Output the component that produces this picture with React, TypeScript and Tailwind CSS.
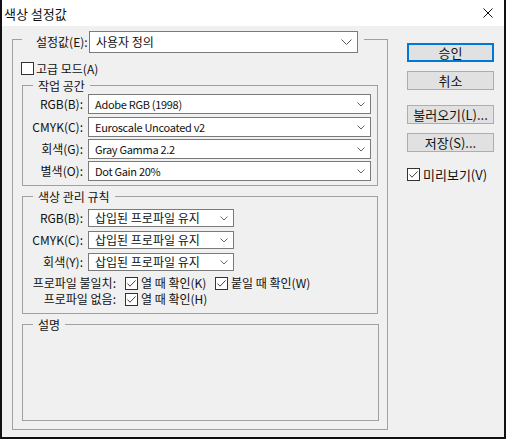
import React from 'react'

function Check({ checked }: { checked?: boolean }) {
  return (
    <span className="w-[13px] h-[13px] border border-[#333] bg-white flex items-center justify-center shrink-0">
      {checked && (
        <svg width="11" height="11" viewBox="0 0 11 11">
          <path d="M1.5 5.5 L4 8.2 L9.6 2.4" fill="none" stroke="#444" strokeWidth="1" />
        </svg>
      )}
    </span>
  )
}

function Chevron({ big }: { big?: boolean }) {
  return big ? (
    <svg width="11" height="6" viewBox="0 0 11 6">
      <path d="M0.5 0.5 L5.5 5.5 L10.5 0.5" fill="none" stroke="#555" strokeWidth="1" />
    </svg>
  ) : (
    <svg width="8" height="5" viewBox="0 0 8 5">
      <path d="M0.5 0.5 L4 4 L7.5 0.5" fill="none" stroke="#666" strokeWidth="1" />
    </svg>
  )
}

function Select({ text, className, big }: { text: string; className: string; big?: boolean }) {
  return (
    <div className={`flex items-center justify-between bg-white border border-[#7a7a7a] pl-[6px] pr-[5px] ${className}`}>
      <span className="whitespace-nowrap">{text}</span>
      <Chevron big={big} />
    </div>
  )
}

function Group({ title, className, children }: { title: string; className: string; children?: React.ReactNode }) {
  return (
    <div className={`border border-[#a0a0a0] ${className}`}>
      <div className="-mt-[8px] ml-[10px] w-fit bg-[#f0f0f0] px-[5px] h-[15px] flex items-center">{title}</div>
      {children}
    </div>
  )
}

function Button({ label, primary }: { label: string; primary?: boolean }) {
  return (
    <div
      className={`h-[19px] flex items-center justify-center bg-[#e1e1e1] ${
        primary ? 'border-2 border-[#0078d7]' : 'border border-[#adadad]'
      }`}
    >
      {label}
    </div>
  )
}

export default function App() {
  const workspace = [
    { label: 'RGB(B):', value: 'Adobe RGB (1998)', mt: 'mt-[1px]' },
    { label: 'CMYK(C):', value: 'Euroscale Uncoated v2', mt: 'mt-[3px]' },
    { label: '회색(G):', value: 'Gray Gamma 2.2', mt: 'mt-[2px]' },
    { label: '별색(O):', value: 'Dot Gain 20%', mt: 'mt-[2px]' },
  ]
  const policies = [
    { label: 'RGB(B):', mt: 'mt-[5px]' },
    { label: 'CMYK(C):', mt: 'mt-[4px]' },
    { label: '회색(Y):', mt: 'mt-[4px]' },
  ]

  return (
    <div className="w-[506px] h-[439px] bg-[#f0f0f0] border-x-2 border-b-2 border-[#111] flex flex-col text-[12px] text-[#111] leading-none overflow-hidden font-['Noto_Sans_CJK_KR',sans-serif]">
      {/* title bar */}
      <div className="h-[26px] shrink-0 bg-white flex items-center justify-between pl-[2px] pr-[11px] text-[13px]">
        <span>색상 설정값</span>
        <svg width="10" height="10" viewBox="0 0 10 10">
          <path d="M0.5 0.5 L9.5 9.5 M9.5 0.5 L0.5 9.5" stroke="#111" strokeWidth="1" />
        </svg>
      </div>

      <div className="flex items-start">
        {/* settings group */}
        <div className="ml-[10px] mt-[13px] w-[376px] h-[391px] border border-[#a0a0a0] pl-[9px]">
          <div className="-mt-[9px] flex items-center w-fit bg-[#f0f0f0] pl-[14px] pr-[6px]">
            <span className="w-[49px] text-right whitespace-nowrap">설정값(E):</span>
            <Select text="사용자 정의" className="ml-[4px] w-[269px] h-[22px]" big />
          </div>

          <div className="mt-[9px] -ml-[1px] flex items-center h-[13px]">
            <Check />
            <span className="ml-[2px]">고급 모드(A)</span>
          </div>

          <Group title="작업 공간" className="mt-[10px] w-[356px] pb-[4px]">
            {workspace.map((row) => (
              <div key={row.label} className={`flex items-center ${row.mt}`}>
                <span className="w-[60px] text-right whitespace-nowrap">{row.label}</span>
                <Select
                  text={row.value}
                  className="ml-[5px] w-[283px] h-[20px] text-[11px] tracking-[-0.3px]"
                />
              </div>
            ))}
          </Group>

          <Group title="색상 관리 규칙" className="mt-[10px] w-[356px] pb-[6px]">
            {policies.map((row) => (
              <div key={row.label} className={`flex items-center ${row.mt}`}>
                <span className="w-[60px] text-right whitespace-nowrap">{row.label}</span>
                <Select text="삽입된 프로파일 유지" className="ml-[5px] w-[146px] h-[18px]" />
              </div>
            ))}
            <div className="mt-[4px] flex items-center h-[16px]">
              <span className="w-[93px] flex justify-end whitespace-nowrap">프로파일 불일치:</span>
              <div className="ml-[9px] w-[90px] flex items-center">
                <Check checked />
                <span className="ml-[3px] whitespace-nowrap">열 때 확인(K)</span>
              </div>
              <Check checked />
              <span className="ml-[3px] whitespace-nowrap">붙일 때 확인(W)</span>
            </div>
            <div className="flex items-center h-[16px]">
              <span className="w-[93px] flex justify-end whitespace-nowrap">프로파일 없음:</span>
              <div className="ml-[9px] flex items-center">
                <Check checked />
                <span className="ml-[3px] whitespace-nowrap">열 때 확인(H)</span>
              </div>
            </div>
          </Group>

          <Group title="설명" className="mt-[10px] w-[357px] h-[97px]" />
        </div>

        {/* buttons */}
        <div className="ml-[19px] mt-[17px] w-[87px] flex flex-col text-[13px]">
          <Button label="승인" primary />
          <div className="mt-[9px]">
            <Button label="취소" />
          </div>
          <div className="mt-[15px]">
            <Button label="불러오기(L)..." />
          </div>
          <div className="mt-[9px]">
            <Button label="저장(S)..." />
          </div>
          <div className="mt-[16px] flex items-center">
            <Check checked />
            <span className="ml-[3px]">미리보기(V)</span>
          </div>
        </div>
      </div>
    </div>
  )
}
